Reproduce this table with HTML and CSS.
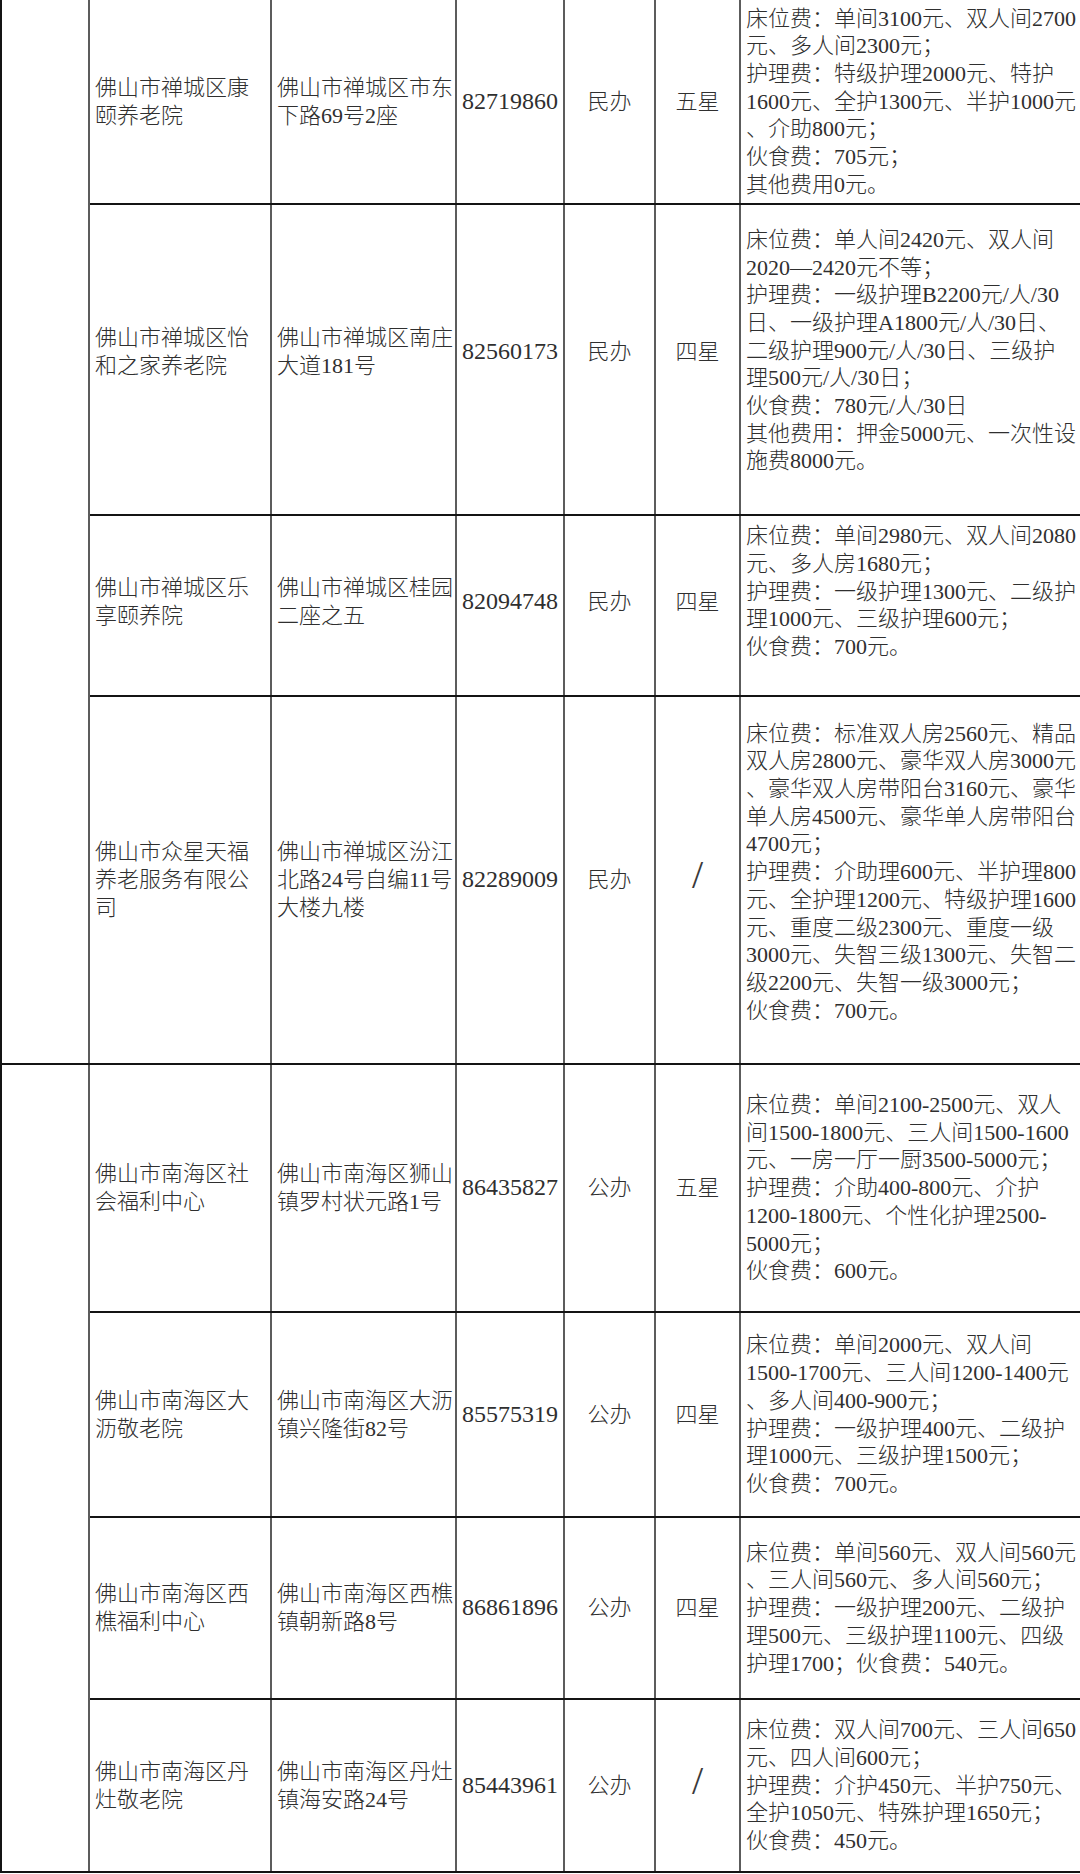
FILE: index.html
```html
<!DOCTYPE html>
<html lang="zh-CN">
<head>
<meta charset="utf-8">
<title>佛山市养老机构收费一览</title>
<link rel="stylesheet" href="styles.css">
</head>
<body>
<table class="sheet">
  <colgroup>
    <col class="c-area">
    <col class="c-name">
    <col class="c-addr">
    <col class="c-tel">
    <col class="c-type">
    <col class="c-star">
    <col class="c-fee">
  </colgroup>
  <tbody>
    <tr class="r1">
      <td class="area" rowspan="4"></td>
      <td class="name">佛山市禅城区康<br>颐养老院</td>
      <td class="addr">佛山市禅城区市东<br>下路69号2座</td>
      <td class="mid tel">82719860</td>
      <td class="mid">民办</td>
      <td class="mid">五星</td>
      <td class="fee">床位费：单间3100元、双人间2700<br>元、多人间2300元；<br>护理费：特级护理2000元、特护<br>1600元、全护1300元、半护1000元<br>、介助800元；<br>伙食费：705元；<br>其他费用0元。</td>
    </tr>
    <tr class="r2">
      <td class="name">佛山市禅城区怡<br>和之家养老院</td>
      <td class="addr">佛山市禅城区南庄<br>大道181号</td>
      <td class="mid tel">82560173</td>
      <td class="mid">民办</td>
      <td class="mid">四星</td>
      <td class="fee">床位费：单人间2420元、双人间<br>2020—2420元不等；<br>护理费：一级护理B2200元/人/30<br>日、一级护理A1800元/人/30日、<br>二级护理900元/人/30日、三级护<br>理500元/人/30日；<br>伙食费：780元/人/30日<br>其他费用：押金5000元、一次性设<br>施费8000元。</td>
    </tr>
    <tr class="r3">
      <td class="name">佛山市禅城区乐<br>享颐养院</td>
      <td class="addr">佛山市禅城区桂园<br>二座之五</td>
      <td class="mid tel">82094748</td>
      <td class="mid">民办</td>
      <td class="mid">四星</td>
      <td class="fee">床位费：单间2980元、双人间2080<br>元、多人房1680元；<br>护理费：一级护理1300元、二级护<br>理1000元、三级护理600元；<br>伙食费：700元。</td>
    </tr>
    <tr class="r4">
      <td class="name">佛山市众星天福<br>养老服务有限公<br>司</td>
      <td class="addr">佛山市禅城区汾江<br>北路24号自编11号<br>大楼九楼</td>
      <td class="mid tel">82289009</td>
      <td class="mid">民办</td>
      <td class="mid"><span class="slash">/</span></td>
      <td class="fee">床位费：标准双人房2560元、精品<br>双人房2800元、豪华双人房3000元<br>、豪华双人房带阳台3160元、豪华<br>单人房4500元、豪华单人房带阳台<br>4700元；<br>护理费：介助理600元、半护理800<br>元、全护理1200元、特级护理1600<br>元、重度二级2300元、重度一级<br>3000元、失智三级1300元、失智二<br>级2200元、失智一级3000元；<br>伙食费：700元。</td>
    </tr>
    <tr class="r5">
      <td class="area" rowspan="4"></td>
      <td class="name">佛山市南海区社<br>会福利中心</td>
      <td class="addr">佛山市南海区狮山<br>镇罗村状元路1号</td>
      <td class="mid tel">86435827</td>
      <td class="mid">公办</td>
      <td class="mid">五星</td>
      <td class="fee">床位费：单间2100-2500元、双人<br>间1500-1800元、三人间1500-1600<br>元、一房一厅一厨3500-5000元；<br>护理费：介助400-800元、介护<br>1200-1800元、个性化护理2500-<br>5000元；<br>伙食费：600元。</td>
    </tr>
    <tr class="r6">
      <td class="name">佛山市南海区大<br>沥敬老院</td>
      <td class="addr">佛山市南海区大沥<br>镇兴隆街82号</td>
      <td class="mid tel">85575319</td>
      <td class="mid">公办</td>
      <td class="mid">四星</td>
      <td class="fee">床位费：单间2000元、双人间<br>1500-1700元、三人间1200-1400元<br>、多人间400-900元；<br>护理费：一级护理400元、二级护<br>理1000元、三级护理1500元；<br>伙食费：700元。</td>
    </tr>
    <tr class="r7">
      <td class="name">佛山市南海区西<br>樵福利中心</td>
      <td class="addr">佛山市南海区西樵<br>镇朝新路8号</td>
      <td class="mid tel">86861896</td>
      <td class="mid">公办</td>
      <td class="mid">四星</td>
      <td class="fee">床位费：单间560元、双人间560元<br>、三人间560元、多人间560元；<br>护理费：一级护理200元、二级护<br>理500元、三级护理1100元、四级<br>护理1700；伙食费：540元。</td>
    </tr>
    <tr class="r8">
      <td class="name">佛山市南海区丹<br>灶敬老院</td>
      <td class="addr">佛山市南海区丹灶<br>镇海安路24号</td>
      <td class="mid tel">85443961</td>
      <td class="mid">公办</td>
      <td class="mid"><span class="slash">/</span></td>
      <td class="fee">床位费：双人间700元、三人间650<br>元、四人间600元；<br>护理费：介护450元、半护750元、<br>全护1050元、特殊护理1650元；<br>伙食费：450元。</td>
    </tr>
  </tbody>
</table>
</body>
</html>
```
FILE: styles.css
```css
html, body {
  margin: 0;
  padding: 0;
  background: #ffffff;
  overflow: hidden;
}

.sheet {
  width: 1100px;
  border-collapse: collapse;
  table-layout: fixed;
  font-family: "Liberation Serif", "Noto Sans CJK SC", serif;
  font-size: 22px;
  line-height: 27.7px;
  color: #2f2f2f;
}

.c-area { width: 88px; }
.c-name { width: 182px; }
.c-addr { width: 185px; }
.c-tel  { width: 108px; }
.c-type { width: 91px; }
.c-star { width: 85px; }
.c-fee  { width: 361px; }

.sheet td {
  padding: 0 0 0 5px;
  vertical-align: middle;
  white-space: nowrap;
  overflow: hidden;
  border-top: 2px solid #141414;
  border-bottom: 2px solid #141414;
  border-left: 2px solid #5c5c5c;
  border-right: 2px solid #5c5c5c;
  font-weight: 300;
}

.sheet td.area {
  border-left: 2px solid #141414;
}

.sheet td.mid {
  text-align: center;
  padding: 0;
}

.sheet td.tel {
  font-size: 24px;
}

.r1 td { border-top: none; }

.r1 { height: 204px; }
.r2 { height: 311px; }
.r3 { height: 181px; }
.r4 { height: 368px; }
.r5 { height: 248px; }
.r6 { height: 205px; }
.r7 { height: 182px; }
.r8 { height: 173px; }

/* content in the upper rows sits a little above the cell centre */
.sheet .r2 td { padding-bottom: 16px; }
.sheet .r2 td.fee { padding-bottom: 18px; }
.sheet .r3 td { padding-bottom: 8px; }
.sheet .r3 td.fee { padding-bottom: 28px; }
.sheet .r4 td.fee { padding-bottom: 16px; }

.slash {
  display: inline-block;
  font-family: "Liberation Serif", serif;
  font-size: 40px;
  font-weight: 400;
  color: #3a3a3a;
  transform: translateY(-2px);
}
```
